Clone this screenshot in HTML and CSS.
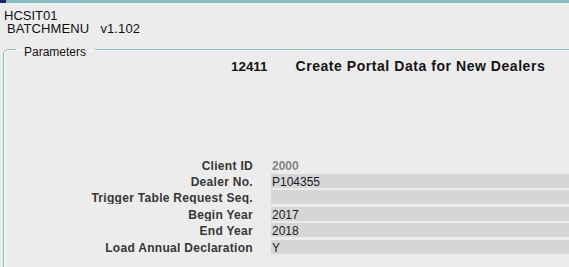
FILE: index.html
```html
<!DOCTYPE html>
<html>
<head>
<meta charset="utf-8">
<link rel="stylesheet" href="styles.css">
</head>
<body>
<div class="titlebar"><span class="appicon"></span></div>
<div class="header">
  <div class="line1">HCSIT01</div>
  <div class="line2">BATCHMENU&nbsp;&nbsp; v1.102</div>
</div>
<fieldset class="group">
  <legend class="legend">Parameters</legend>
  <div class="title">
    <span class="jobno">12411</span>
    <span class="jobname">Create Portal Data for New Dealers</span>
  </div>
  <div class="form">
    <div class="label">Client ID</div><div class="field disabled">2000</div>
    <div class="label">Dealer No.</div><div class="field">P104355</div>
    <div class="label">Trigger Table Request Seq.</div><div class="field"></div>
    <div class="label">Begin Year</div><div class="field">2017</div>
    <div class="label">End Year</div><div class="field">2018</div>
    <div class="label">Load Annual Declaration</div><div class="field">Y</div>
  </div>
</fieldset>
</body>
</html>
```
FILE: styles.css
```css
html, body {
  margin: 0;
  padding: 0;
}
body {
  width: 569px;
  height: 267px;
  overflow: hidden;
  background: #ececec;
  font-family: "Liberation Sans", Arial, sans-serif;
  color: #111;
}
.titlebar {
  height: 3px;
  background: #7fbfbf;
  display: flex;
}
.appicon {
  width: 6px;
  height: 3px;
  background: #1c2a6a;
}
.header {
  padding-top: 5.5px;
  font-size: 13px;
  line-height: 13.5px;
  color: #101010;
}
.line1 {
  padding-left: 4px;
}
.line2 {
  padding-left: 7px;
  letter-spacing: 0.1px;
}
.group {
  margin: 7.2px 0 0 3px;
  padding: 0;
  width: 600px;
  height: 260px;
  box-sizing: border-box;
  border: 1px solid #7fbfbf;
  border-radius: 5px;
  box-shadow: inset 1px 1px 0 #f8f8f8;
}
.legend {
  margin-left: 12px;
  padding: 4px 9px 0 8px;
  font-size: 12px;
  line-height: 10px;
  color: #111;
}
.title {
  display: flex;
  align-items: baseline;
  gap: 28px;
  padding: 1px 0 0 227px;
  height: 16px;
  line-height: 16px;
  font-weight: bold;
  color: #141414;
  margin-bottom: 84px;
}
.jobno {
  font-size: 13.4px;
}
.jobname {
  font-size: 14px;
  letter-spacing: 0.55px;
}
.form {
  display: grid;
  grid-template-columns: 249px 320px;
  column-gap: 18px;
  row-gap: 2.4px;
  font-size: 12px;
}
.label, .field {
  height: 14px;
  line-height: 16px;
  overflow: hidden;
  white-space: nowrap;
}
.label {
  text-align: right;
  font-weight: bold;
  color: #363636;
  letter-spacing: 0.3px;
}
.field {
  background: #d6d6d6;
  padding-left: 1px;
  color: #161626;
}
.field.disabled {
  background: transparent;
  color: #858585;
  font-weight: bold;
}
```
